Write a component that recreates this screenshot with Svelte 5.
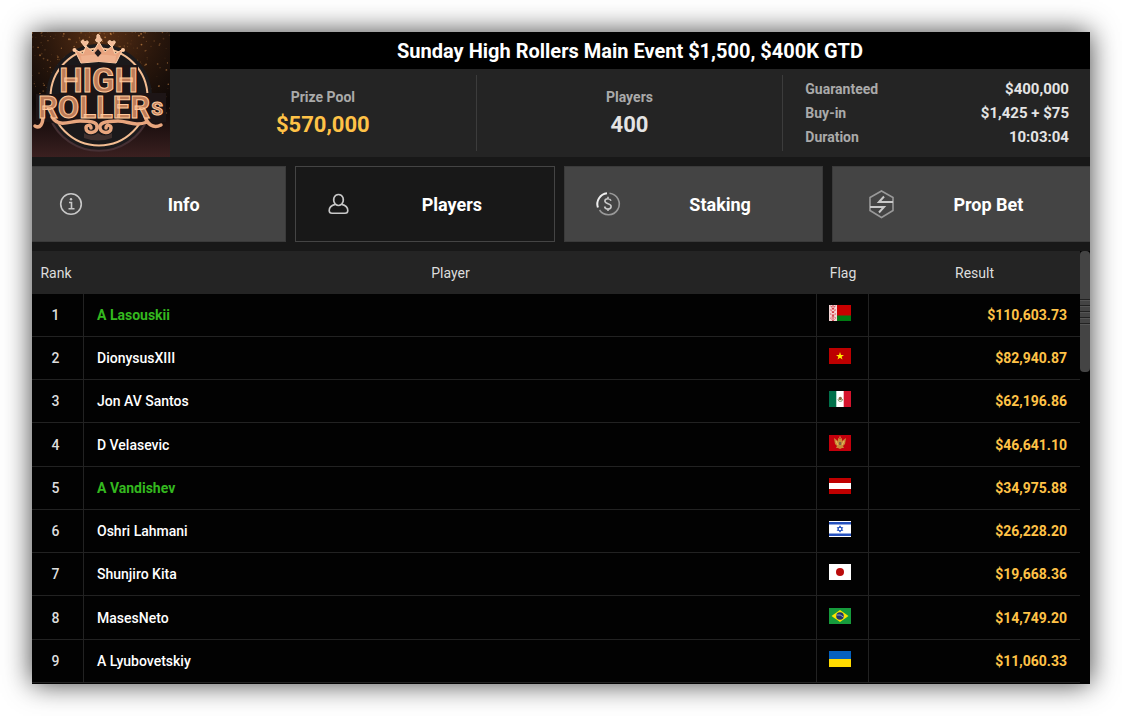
<script lang="ts">
	let activeTab = 'Players';

	const tabs = ['Info', 'Players', 'Staking', 'Prop Bet'];

	const details = [
		{ label: 'Guaranteed', value: '$400,000' },
		{ label: 'Buy-in', value: '$1,425 + $75' },
		{ label: 'Duration', value: '10:03:04' }
	];

	const players = [
		{ name: 'A Lasouskii', flag: 'by', result: '$110,603.73', friend: true },
		{ name: 'DionysusXIII', flag: 'vn', result: '$82,940.87' },
		{ name: 'Jon AV Santos', flag: 'mx', result: '$62,196.86' },
		{ name: 'D Velasevic', flag: 'me', result: '$46,641.10' },
		{ name: 'A Vandishev', flag: 'at', result: '$34,975.88', friend: true },
		{ name: 'Oshri Lahmani', flag: 'il', result: '$26,228.20' },
		{ name: 'Shunjiro Kita', flag: 'jp', result: '$19,668.36' },
		{ name: 'MasesNeto', flag: 'br', result: '$14,749.20' },
		{ name: 'A Lyubovetskiy', flag: 'ua', result: '$11,060.33' }
	];

	// gold dust in the logo background, denser near the top
	const sparks = Array.from({ length: 260 }, (_, i) => {
		const x = (Math.abs(Math.sin(i * 12.9898) * 43758.5453) % 1) * 138;
		const y = Math.pow(Math.abs(Math.sin(i * 78.233) * 12543.123) % 1, 1.7) * 82;
		return { x, y, r: 0.3 + ((i * 7) % 5) * 0.15, o: 0.2 + ((i * 13) % 7) * 0.08 };
	});
</script>

<main class="lobby">
	<header>
		<svg class="logo" viewBox="0 0 138 125" preserveAspectRatio="none" aria-hidden="true">
			<defs>
				<radialGradient id="glow" cx="50%" cy="0%" r="75%">
					<stop offset="0" stop-color="#5a3015" />
					<stop offset="0.55" stop-color="#2a170c" />
					<stop offset="1" stop-color="#0d0807" />
				</radialGradient>
				<linearGradient id="floor" x1="0" y1="0" x2="0" y2="1">
					<stop offset="0" stop-color="#2b1719" stop-opacity="0" />
					<stop offset="1" stop-color="#3b2020" />
				</linearGradient>
			</defs>
			<rect width="138" height="125" fill="url(#glow)" />
			<rect y="68" width="138" height="57" fill="url(#floor)" />
			{#each sparks as s}
				<circle cx={s.x} cy={s.y} r={s.r} fill="#d08c4b" opacity={s.o} />
			{/each}
			<circle cx="67" cy="65" r="53" fill="#1c1a1c" />
			<path d="M18 86 A53 53 0 0 0 116 86" fill="none" stroke="#463034" stroke-width="2" />
			<circle cx="67" cy="65" r="48.5" fill="#1b191b" stroke="#f3bd92" stroke-width="2" />
			<path d="M52 101q7 5 14 0q7 5 14 0v5q-14 5-28 0z" fill="#59403c" opacity="0.6" />
			<path d="M27 33H106V61H134V90L103 93 67 90 31 93 4 88V62H27z" fill="#1d1516" />
			<path
				d="M42 17l9 5 3-8 7 6 6-10 6 10 7-6 3 8 8-5-7 14q-17-3-35 0z"
				fill="#e9a47f"
				stroke="#ffd2ac"
				stroke-width="1"
			/>
			<path d="M49 24q18-3 35 0l-1 7q-16-3-33 0z" fill="#efb18e" />
			<path d="M66 17l3.500 4-3.500 4-3.500-4z" fill="#231a1b" />
			<path
				d="M66 10c-3 0-3-3-1-4c-1-5 3-5 3 0c3 1 2 4-2 4M53 15l-4-5c1-3 3-2 4 0c2-2 4-1 3 1zM80 15l-4-4c0-3 2-3 4-1c2-2 4-1 3 1z"
				fill="#f4bc9a"
				stroke="#ffd2ac"
			/>
			<g fill="#ffcaa2"><circle cx="42.500" cy="18" r="2" /><circle cx="91" cy="18" r="2" /></g>
			<g fill="none" stroke="#e8a67e" stroke-width="3.500" stroke-linecap="round">
				<path d="M11 84c0 8-3 13-8 10" />
				<path d="M20 85c7 11 18 4 28 4c14 0 18 2 17 7c-1 6-11 6-11 0c0-3 5-4 5 0" />
				<path d="M113 84c2 8 8 13 16 9M115 90c-12 5-19-1-29-1c-13 0-19 2-18 7c1 6 11 6 11 0c0-3-5-4-5 0" />
			</g>
			<g class="logo-text" text-anchor="middle">
				<text x="66.500" y="60" font-size="33">HIGH</text>
				<text x="62" y="86" font-size="31">ROLLER</text>
				<text x="125" y="83" font-size="19">S</text>
			</g>
		</svg>

		<div class="summary">
			<h1>Sunday High Rollers Main Event $1,500, $400K GTD</h1>
			<div class="stats">
				<div class="stat">
					<span class="label">Prize Pool</span>
					<strong class="gold">$570,000</strong>
				</div>
				<div class="stat">
					<span class="label">Players</span>
					<strong>400</strong>
				</div>
				<dl>
					{#each details as item}
						<div>
							<dt>{item.label}</dt>
							<dd>{item.value}</dd>
						</div>
					{/each}
				</dl>
			</div>
		</div>
	</header>

	<nav>
		{#each tabs as tab}
			<button class:active={tab === activeTab} on:click={() => (activeTab = tab)}>
				<svg class="icon" viewBox="0 0 36 32" aria-hidden="true">
					{#if tab === 'Info'}
						<circle cx="17" cy="16" r="10.300" />
						<path d="M15 14.500h2.500v6M14.500 20.700h6" />
						<circle class="solid" cx="17" cy="11.300" r="1.200" />
					{:else if tab === 'Players'}
						<path
							d="M13.400 16.400C10 12 12 6.500 16.500 6.500s6.500 5.500 3.100 9.900M13.400 16.200q3.100 2.600 6.200 0M13.400 16.400C9 17.500 7.200 19.500 7.200 22.500c0 1.800 1 2.700 2.800 2.700h13c1.800 0 2.800-.9 2.800-2.700c0-3-1.800-5-6.200-6.100"
						/>
					{:else if tab === 'Staking'}
						<path class="dim" d="M18.500 5.200A10.800 10.800 0 1 1 8.500 22" />
						<path class="bright" d="M16 5.300A10.800 10.800 0 0 0 6.900 19.500" />
						<path
							d="M20 12.700c-.5-1.400-1.600-2-3.100-2c-1.900 0-3 1-3 2.400c0 3.400 6.200 2 6.200 5.300c0 1.500-1.200 2.600-3.200 2.600c-1.800 0-3-.9-3.300-2.500M17 8.700v2M17 21v2"
						/>
					{:else}
						<path class="dim" d="M22.500 3l11.500 6.500v13L22.500 29.500 11 22.500v-13z" />
						<path class="bolt" d="M34 14H20l5-5.500M11 19h14l-5 5.500" />
					{/if}
				</svg>
				<span>{tab}</span>
			</button>
		{/each}
	</nav>

	<section class="results">
		<table>
			<thead>
				<tr>
					<th class="rank">Rank</th>
					<th>Player</th>
					<th class="flag">Flag</th>
					<th class="result">Result</th>
				</tr>
			</thead>
			<tbody>
				{#each players as player, i}
					<tr>
						<td class="rank">{i + 1}</td>
						<td class="name" class:friend={player.friend}>{player.name}</td>
						<td class="flag">
							<svg viewBox="0 0 22 16" role="img" aria-label={player.flag}>
								{#if player.flag === 'by'}
									<rect width="22" height="16" fill="#c80000" />
									<rect y="10.500" width="22" height="5.500" fill="#007a12" />
									<rect width="8" height="16" fill="#f4d6d6" />
									<path
										d="M1.500 1l5 4-5 4 5 4-3 3M6.500 1l-5 4 5 4-5 4 3 3M4 0v16"
										fill="none"
										stroke="#d33540"
										stroke-width="1"
										stroke-dasharray="2 1"
									/>
								{:else if player.flag === 'vn'}
									<rect width="22" height="16" fill="#bd0000" />
									<path
										d="M11 4l1 2.900h3l-2.400 1.800.9 2.900L11 9.800l-2.500 1.800.9-2.900L7 6.900h3z"
										fill="#ffed00"
									/>
								{:else if player.flag === 'mx'}
									<rect width="22" height="16" fill="#fff" />
									<rect width="7.300" height="16" fill="#00704a" />
									<rect x="14.700" width="7.300" height="16" fill="#d5142d" />
									<path d="M9 8a2.300 2.500 0 0 0 4.600 0" fill="none" stroke="#7fa06a" />
									<circle cx="11.300" cy="7.500" r="1.700" fill="#8b6742" />
								{:else if player.flag === 'me'}
									<rect width="22" height="16" fill="#c4000c" />
									<path
										d="M9 3l2 1 2-1v3l4-3-1 6-2 2 1 2h-2l-2 1-2-1H7l1-2-2-2-1-6 4 3z"
										fill="#c88b37"
									/>
									<path d="M11 1.500v2M7 6l2 4M15 6l-2 4" stroke="#e8bd63" stroke-width="1" />
									<rect x="10" y="7" width="2.200" height="3" fill="#7d6246" />
								{:else if player.flag === 'at'}
									<rect width="22" height="16" fill="#c00000" />
									<rect y="5" width="22" height="6" fill="#fff" />
								{:else if player.flag === 'il'}
									<rect width="22" height="16" fill="#fff" />
									<rect y="1" width="22" height="2.500" fill="#2450bd" />
									<rect y="12.500" width="22" height="2.500" fill="#2450bd" />
									<path
										d="M11 4.800l2.700 4.700H8.300zM11 11.200l2.700-4.700H8.300z"
										fill="none"
										stroke="#2450bd"
										stroke-width="0.900"
									/>
								{:else if player.flag === 'jp'}
									<rect width="22" height="16" fill="#fff" />
									<circle cx="11" cy="8" r="4" fill="#b90b0b" />
								{:else if player.flag === 'br'}
									<rect width="22" height="16" fill="#169b3c" />
									<path d="M11 2l8.500 6L11 14 2.500 8z" fill="#f9e400" />
									<circle cx="11" cy="8" r="3.800" fill="#20336f" />
									<path d="M7.500 7q4-1 7 2" fill="none" stroke="#b4c5cf" stroke-width="0.800" />
								{:else}
									<rect width="22" height="8" fill="#0560bd" />
									<rect y="8" width="22" height="8" fill="#ffda00" />
								{/if}
							</svg>
						</td>
						<td class="result">{player.result}</td>
					</tr>
				{/each}
			</tbody>
		</table>
		<div class="scrollbar">
			<div class="thumb"><i></i><i></i><i></i><i></i><i></i></div>
		</div>
	</section>
</main>

<style>
	:global(body) {
		background: #fff;
	}

	.lobby {
		box-sizing: border-box;
		height: calc(100vh - 64px);
		margin: 32px;
		display: flex;
		flex-direction: column;
		overflow: hidden;
		background: #181818;
		box-shadow: 0 0 26px rgba(0, 0, 0, 0.75);
		color: #fff;
		font-family: Roboto, 'Liberation Sans', sans-serif;
		font-size: 14px;
	}

	header {
		display: flex;
		flex: none;
		height: 125px;
	}
	.logo {
		width: 138px;
		height: 125px;
		flex: none;
	}
	.logo-text {
		font-family: Roboto, 'Liberation Sans', sans-serif;
		font-weight: bold;
		fill: #bd7c58;
		stroke: #ffc89c;
		stroke-width: 1;
	}
	.summary {
		flex: 1;
		display: flex;
		flex-direction: column;
	}
	h1 {
		margin: 0;
		padding-top: 1px;
		background: #000;
		font-size: 20px;
		font-weight: 700;
		line-height: 36px;
		text-align: center;
	}
	.stats {
		flex: 1;
		display: grid;
		grid-template-columns: repeat(3, 1fr);
		padding: 6px 0;
		background: #242424;
	}
	.stat {
		display: flex;
		flex-direction: column;
		align-items: center;
		padding-top: 10px;
		border-right: 1px solid #3c3c3c;
	}
	.label,
	dt {
		color: #aaa;
		font-weight: 700;
	}
	.label {
		line-height: 24px;
	}
	.stat strong {
		color: #e4e4e4;
		font-size: 22px;
		line-height: 32px;
	}
	.stat .gold {
		color: #ffc247;
	}
	dl {
		margin: 0;
		padding: 2px 21px 2px 22px;
	}
	dl div {
		display: flex;
		justify-content: space-between;
		line-height: 24px;
	}
	dd {
		margin: 0;
		color: #e4e4e4;
		font-size: 15px;
		font-weight: 700;
	}

	nav {
		display: grid;
		grid-template-columns: repeat(4, 1fr);
		gap: 9px;
		flex: none;
		margin: 9px -1px 9px -5px;
	}
	button {
		display: flex;
		align-items: center;
		height: 76px;
		padding: 0 8px 0 26px;
		border: 1px solid #3a3a3a;
		background: #444;
		color: #fff;
		font-family: inherit;
		font-size: 18px;
		font-weight: 700;
		cursor: pointer;
	}
	button.active {
		border-color: #444;
		background: #181818;
	}
	button span {
		flex: 1;
		text-align: center;
	}
	.icon {
		width: 36px;
		height: 32px;
		flex: none;
		fill: none;
		stroke: #c8c8c8;
		stroke-width: 1.6;
	}
	.icon .dim {
		stroke: #999;
	}
	.icon .bolt {
		stroke-width: 2;
	}
	.icon .bright {
		stroke: #eee;
		stroke-width: 2;
	}
	.icon .solid {
		fill: #c8c8c8;
		stroke: none;
	}

	.results {
		flex: 1;
		display: flex;
		align-items: flex-start;
		min-height: 0;
		overflow: hidden;
		background: #020202;
	}
	table {
		flex: 1;
		table-layout: fixed;
		border-collapse: separate;
		border-spacing: 0;
	}
	th,
	td {
		box-sizing: border-box;
		height: 43px;
		padding: 0;
	}
	th {
		background: #242424;
		color: #ddd;
		font-weight: 400;
	}
	td {
		border-right: 1px solid #222;
		border-bottom: 1px solid #222;
		font-weight: 500;
	}
	tr:nth-child(4n) td {
		height: 44px;
	}
	.rank {
		width: 52px;
		padding-right: 4px;
		color: #ddd;
		text-align: center;
	}
	td.name {
		padding-left: 13px;
	}
	td.friend {
		color: #34b81f;
		font-weight: 700;
	}
	.flag {
		width: 52px;
	}
	td.flag {
		padding: 0 0 4px 12px;
	}
	.flag svg {
		display: block;
		width: 22px;
		height: 16px;
	}
	.result {
		width: 211px;
	}
	td.result {
		padding-right: 13px;
		border-right: none;
		color: #ffc247;
		font-weight: 700;
		text-align: right;
	}

	.scrollbar {
		width: 10px;
		flex: none;
	}
	.thumb {
		display: flex;
		flex-direction: column;
		justify-content: center;
		gap: 4px;
		height: 121px;
		border-radius: 4px;
		background: #444;
	}
	.thumb i {
		height: 1px;
		border-top: 1px solid #222;
		background: #555;
	}
</style>
